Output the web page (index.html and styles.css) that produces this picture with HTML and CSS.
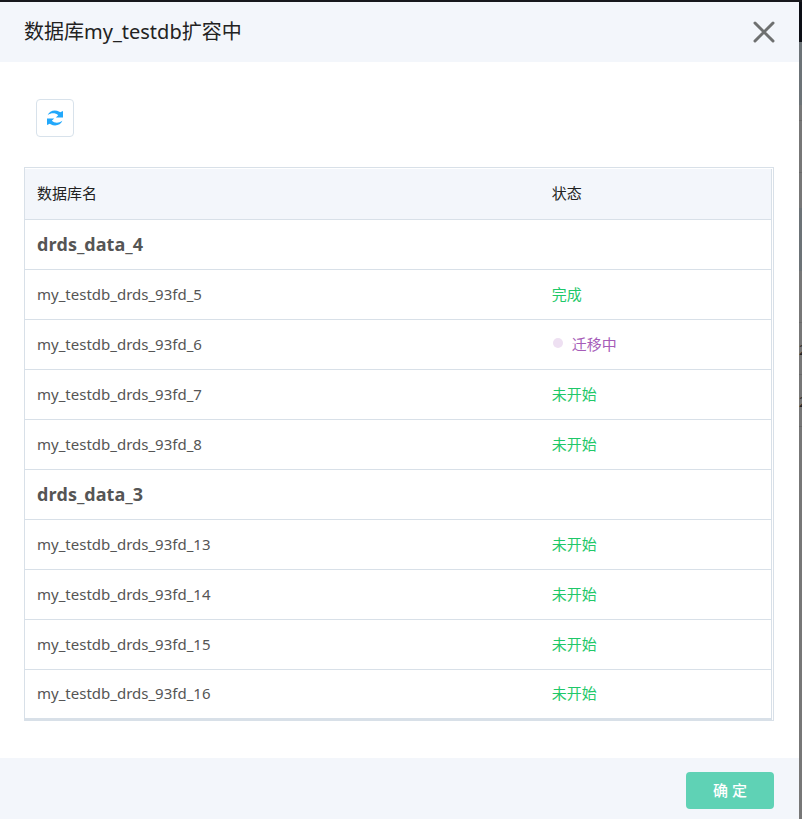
FILE: index.html
```html
<!DOCTYPE html>
<html lang="zh-CN">
<head>
    <meta charset="UTF-8">
    <meta name="viewport" content="width=device-width, initial-scale=1.0">
    <title>数据库my_testdb扩容中</title>
    <link rel="stylesheet" href="styles.css">
</head>
<body>
    <div class="dialog">
        <div class="dialog-header">
            <h1>数据库my_testdb扩容中</h1>
            <button type="button" class="close" aria-label="关闭">
                <svg width="22" height="22" viewBox="0 0 22 22">
                    <path d="M2 2L20 20M20 2L2 20" fill="none" stroke="#6e7070" stroke-width="3" stroke-linecap="round"/>
                </svg>
            </button>
        </div>

        <div class="dialog-body">
            <button type="button" class="refresh" aria-label="刷新">
                <svg width="16" height="16" viewBox="0 0 16 16" fill="#22a8fb">
                    <path d="M0.6 5.2C2.4 1 7.6-0.8 12.4 1.8L13.2 2.2L16 1V7.6H8.8L11.2 5.2C8.4 2.8 4.2 2.6 0.6 5.2Z"/>
                    <path d="M15.4 10.8C13.6 15 8.4 16.8 3.6 14.2L2.8 13.8L0 15V8.4H7.2L4.8 10.8C7.6 13.2 11.8 13.4 15.4 10.8Z"/>
                </svg>
            </button>

            <div class="table-box">
                <table class="db-table">
                    <thead>
                        <tr><th class="col-name">数据库名</th><th>状态</th></tr>
                    </thead>
                    <tbody>
                        <tr class="group"><th colspan="2">drds_data_4</th></tr>
                        <tr><td>my_testdb_drds_93fd_5</td><td class="status">完成</td></tr>
                        <tr><td>my_testdb_drds_93fd_6</td><td class="status moving">迁移中</td></tr>
                        <tr><td>my_testdb_drds_93fd_7</td><td class="status">未开始</td></tr>
                        <tr><td>my_testdb_drds_93fd_8</td><td class="status">未开始</td></tr>
                        <tr class="group"><th colspan="2">drds_data_3</th></tr>
                        <tr><td>my_testdb_drds_93fd_13</td><td class="status">未开始</td></tr>
                        <tr><td>my_testdb_drds_93fd_14</td><td class="status">未开始</td></tr>
                        <tr><td>my_testdb_drds_93fd_15</td><td class="status">未开始</td></tr>
                        <tr><td>my_testdb_drds_93fd_16</td><td class="status">未开始</td></tr>
                    </tbody>
                </table>
            </div>
        </div>

        <div class="dialog-footer">
            <button type="button" class="confirm">确 定</button>
        </div>
    </div>

    <!-- 遮罩下露出的页面边缘 -->
    <div class="backdrop" aria-hidden="true">
        <div class="backdrop-nav"></div>
        <div class="backdrop-head"></div>
        <div class="backdrop-row short"></div>
        <div class="backdrop-row"></div>
        <div class="backdrop-gap"></div>
        <div class="backdrop-head"></div>
        <div class="backdrop-row"></div>
        <div class="backdrop-row">2</div>
        <div class="backdrop-row">2</div>
    </div>
</body>
</html>
```

FILE: styles.css
```css
* {
    box-sizing: border-box;
}
body {
    margin: 0;
    min-height: 100vh;
    display: flex;
    border-top: 2px solid #17181d;
    background-color: #777;
    font-family: 'Noto Sans', 'Noto Sans CJK SC', sans-serif;
    font-size: 15px;
    line-height: 20px;
    color: #555;
}
button {
    padding: 0;
    font: inherit;
    cursor: pointer;
}
svg {
    display: block;
}

.dialog {
    flex: 1;
    display: flex;
    flex-direction: column;
    background-color: #fff;
}
.dialog-header {
    display: flex;
    align-items: center;
    justify-content: space-between;
    height: 60px;
    padding: 0 24px;
    background-color: #f3f6fb;
}
.dialog-header h1 {
    margin: 0;
    font-size: 20px;
    font-weight: 400;
    line-height: 28px;
    color: #222;
}
.close {
    border: 0;
    background: none;
}

.dialog-body {
    flex: 1;
    padding: 37px 25px 37px 24px;
}
.refresh {
    display: flex;
    align-items: center;
    justify-content: center;
    width: 38px;
    height: 38px;
    margin: 0 12px 30px;
    border: 1px solid #d8e2eb;
    border-radius: 4px;
    background-color: #fff;
}

.table-box {
    padding: 1px 1px 0 0;
    border: 1px solid #d8e0e8;
}
.db-table {
    width: 100%;
    border-collapse: separate;
    border-spacing: 0;
    border-right: 1px solid #d8e0e8;
    border-bottom: 1px solid #d8e0e8;
    text-align: left;
}
.db-table th,
.db-table td {
    height: 50px;
    padding: 0 12px 2px;
    border-bottom: 1px solid #d8e0e8;
}
.db-table tr:last-child td {
    height: 49px;
}
.db-table thead th {
    height: 51px;
    background-color: #f3f6fb;
    font-weight: 400;
    color: #222;
}
.db-table .col-name {
    width: 69%;
}
.db-table .group th {
    font-family: 'Open Sans', 'Noto Sans CJK SC', sans-serif;
    font-size: 18px;
    font-weight: 700;
}
.db-table .status {
    color: #1fc869;
}
.db-table .moving {
    color: #a65cb8;
}
.moving::before {
    content: '';
    display: inline-block;
    width: 10px;
    height: 10px;
    margin: 0 9px 2px 1px;
    border-radius: 50%;
    background-color: #eee0f2;
}

.dialog-footer {
    display: flex;
    align-items: center;
    justify-content: flex-end;
    padding: 14px 25px 10px;
    background-color: #f3f6fb;
}
.confirm {
    width: 88px;
    height: 37px;
    padding-bottom: 2px;
    border: 0;
    border-radius: 4px;
    background-color: #5fd2b5;
    font-weight: 500;
    color: #fff;
}

.backdrop {
    width: 3px;
    overflow: hidden;
    color: #222;
}
.backdrop-nav {
    height: 40px;
    background-color: #0c0e15;
}
.backdrop-head {
    height: 63px;
    background-color: #6c7377;
}
.backdrop-row {
    height: 52px;
    line-height: 52px;
    border-bottom: 1px solid #6a6a6a;
}
.backdrop-row.short {
    height: 16px;
}
.backdrop-gap {
    height: 35px;
}
```
